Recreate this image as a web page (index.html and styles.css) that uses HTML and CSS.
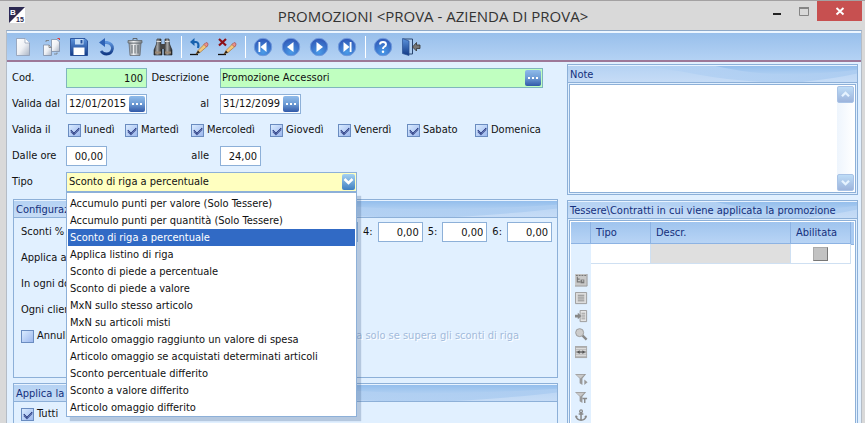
FILE: index.html
```html
<!DOCTYPE html>
<html lang="it">
<head>
<meta charset="utf-8">
<title>Promozioni</title>
<link rel="stylesheet" href="styles.css">
</head>
<body>
<svg class="defs" aria-hidden="true">
  <defs>
    <linearGradient id="paper" x1="0" y1="0" x2="1" y2="1"><stop offset="0" stop-color="#fff"/><stop offset=".5" stop-color="#eef0f4"/><stop offset="1" stop-color="#a9b3c4"/></linearGradient>
    <linearGradient id="blue" x1="0" y1="0" x2="0" y2="1"><stop offset="0" stop-color="#5c93dc"/><stop offset="1" stop-color="#123a86"/></linearGradient>
    <radialGradient id="ball" cx=".5" cy=".8" r=".8"><stop offset="0" stop-color="#4a9be8"/><stop offset="1" stop-color="#2f55b4"/></radialGradient>
    <linearGradient id="metal"><stop offset="0" stop-color="#8d9297"/><stop offset=".4" stop-color="#f3f4f5"/><stop offset="1" stop-color="#747b82"/></linearGradient>
    <linearGradient id="barrel"><stop offset="0" stop-color="#222"/><stop offset=".4" stop-color="#aaa"/><stop offset="1" stop-color="#1c1c1c"/></linearGradient>
    <linearGradient id="wave-fill" x1="0" y1="0" x2="0" y2="1"><stop offset="0" stop-color="#94beec"/><stop offset="1" stop-color="#afcff2"/></linearGradient>
    <linearGradient id="wave-soft" x1="0" y1="0" x2="1" y2="0"><stop offset="0" stop-color="#b4d2f4"/><stop offset="1" stop-color="#a8caf0"/></linearGradient>
    <symbol id="wave" viewBox="0 0 290 17" preserveAspectRatio="none">
      <path d="M50 0Q95 1 130 9Q160 15 195 17H235Q270 13 290 8V0Z" fill="url(#wave-soft)" opacity=".75"/>
      <path d="M148 0Q185 9 225 9Q260 8 290 4V0Z" fill="url(#wave-fill)"/>
    </symbol>
    <symbol id="pencil" viewBox="0 0 20 20">
      <path d="M1 17.5H9" stroke="#111" stroke-width="1.3"/>
      <path d="M7 17L9 13.5L16 6.5L18.5 9L11 15.5Z" fill="#f2c77b" stroke="#a26a24" stroke-width=".6"/>
      <path d="M7 17L9 13.5L11 15.5Z" fill="#2b2118"/>
      <path d="M15 7.5L17 5.5Q19.500 5.500 19 8L17.500 10Z" fill="#e89090" stroke="#9b4444" stroke-width=".6"/>
    </symbol>
    <symbol id="nav" viewBox="0 0 20 20"><circle cx="10" cy="10" r="8.700" fill="url(#ball)" stroke="#6f9ade"/></symbol>
    <symbol id="funnel" viewBox="0 0 14 14"><path d="M0 1H12L8 6V13L5 11V6Z" fill="#999"/><path d="M1 2H10L6 6" fill="#c8c8c8"/></symbol>
  </defs>
</svg>

<header class="titlebar">
  <svg class="logo" viewBox="0 0 16 16" aria-hidden="true"><rect width="16" height="16" rx="1" fill="#fff"/><path d="M0 0H16L0 16Z" fill="#2c2951"/><text x="1" y="8" class="logo-b">B</text><text x="7" y="15" class="logo-n">15</text></svg>
  <h1>PROMOZIONI &lt;PROVA - AZIENDA DI PROVA&gt;</h1>
  <div class="window-buttons">
    <button class="win" aria-label="Riduci"><svg viewBox="0 0 12 12"><path d="M2 9H10" stroke="#222" stroke-width="2"/></svg></button>
    <button class="win" aria-label="Ingrandisci"><svg viewBox="0 0 12 12"><path d="M1.500 3.500H10.500V10.500H1.500Z" fill="none" stroke="#858585"/><path d="M1 3H11" stroke="#858585" stroke-width="2"/></svg></button>
    <button class="win close" aria-label="Chiudi"><svg viewBox="0 0 12 12"><path d="M2.500 3L9.500 9.500M9.500 3L2.500 9.500" stroke="#fff" stroke-width="1.900"/></svg></button>
  </div>
</header>

<div class="frame">
  <nav class="toolbar" aria-label="Comandi">
    <button aria-label="Nuovo"><svg viewBox="0 0 20 20"><path d="M3.500 1.500H12L16.500 6V18.500H3.500Z" fill="url(#paper)" stroke="#8d9bb2" stroke-width=".8"/><path d="M12 1.500V6H16.500" fill="#fff" stroke="#8d9bb2" stroke-width=".7"/></svg></button>
    <button aria-label="Duplica"><svg viewBox="0 0 20 20"><path d="M10.500 2.500H16L18.500 5V14.500H10.500Z" fill="url(#paper)" stroke="#7f8ea6" stroke-width=".8"/><path d="M2.500 8H8L10.500 10.500V18.500H2.500Z" fill="url(#paper)" stroke="#7f8ea6" stroke-width=".8"/><path d="M8 8V10.500H10.500M5 5V3.500H8M13 17H16V15.500" fill="none" stroke="#777" stroke-width=".8"/><path d="M16.500 1.500H18.500V3" stroke="#d33" fill="none"/></svg></button>
    <button aria-label="Salva"><svg viewBox="0 0 20 20"><path d="M1.500 1.500H16L18.500 4V18.500H1.500Z" fill="url(#blue)" stroke="#1a438f" stroke-width=".8"/><path d="M6 2H14.500V7.500H6Z" fill="#c7def6"/><path d="M11.500 3H13.500V6.500H11.500Z" fill="#23509d"/><path d="M4.500 10.500H15.500V18H4.500Z" fill="#fff"/></svg></button>
    <button aria-label="Annulla"><svg viewBox="0 0 20 20"><path d="M5 5.500H10Q15.500 6.500 15.500 11.500Q14.500 17 9.500 17Q6 17 4 14" fill="none" stroke="url(#blue)" stroke-width="2.800"/><path d="M2 5.500L8 1V10Z" fill="#2e62b5"/></svg></button>
    <button aria-label="Elimina"><svg viewBox="0 0 20 20"><path d="M4 6H16L15 18.500H5Z" fill="url(#metal)" stroke="#697078" stroke-width=".8"/><path d="M3 3.500H17V6H3Z" fill="url(#metal)" stroke="#626970" stroke-width=".8"/><path d="M8 3V1.500H12V3M7 8V16.500M10 8V16.500M13 8V16.500" fill="none" stroke="#5f666d"/></svg></button>
    <button aria-label="Cerca"><svg viewBox="0 0 20 20"><path d="M4 2H8V7L9 9V18H1V13L3.500 7Z" fill="url(#barrel)" stroke="#222" stroke-width=".6"/><path d="M12 2H16L16.500 7L19 13V18H11V9L12 7Z" fill="url(#barrel)" stroke="#222" stroke-width=".6"/><path d="M8 7H12V12H8Z" fill="#444"/><path d="M2 15.500H8M12 15.500H18" stroke="#9b8874" stroke-width="2"/><path d="M3.500 4.500H8M12 4.500H16.500" stroke="#ddd"/></svg></button>
    <span class="sep"></span>
    <button aria-label="Ripristina modifica"><svg viewBox="0 0 20 20"><use href="#pencil"/><path d="M4 5H7Q10.500 5.500 9 11" fill="none" stroke="#1761ae" stroke-width="2.200"/><path d="M1 5L5.500 1V9Z" fill="#1761ae"/></svg></button>
    <button aria-label="Annulla modifica"><svg viewBox="0 0 20 20"><use href="#pencil"/><path d="M2 2L9 8.500M9 2L2 8.500" stroke="#8d1017" stroke-width="2.200"/></svg></button>
    <span class="sep"></span>
    <button aria-label="Primo"><svg viewBox="0 0 20 20"><use href="#nav"/><path d="M13.500 5V15L7.500 10ZM5.500 5H7.300V15H5.500Z" fill="#fff"/></svg></button>
    <button aria-label="Precedente"><svg viewBox="0 0 20 20"><use href="#nav"/><path d="M12.500 5V15L6 10Z" fill="#fff"/></svg></button>
    <button aria-label="Successivo"><svg viewBox="0 0 20 20"><use href="#nav"/><path d="M7.500 5V15L14 10Z" fill="#fff"/></svg></button>
    <button aria-label="Ultimo"><svg viewBox="0 0 20 20"><use href="#nav"/><path d="M6.500 5V15L12.500 10ZM12.700 5H14.500V15H12.700Z" fill="#fff"/></svg></button>
    <span class="sep"></span>
    <button aria-label="Aiuto"><svg viewBox="0 0 20 20"><use href="#nav"/><path d="M7 7.500Q7 5 10 5Q13 5 13 7.500Q13 9 11 10Q10 10.500 10 12" fill="none" stroke="#fff" stroke-width="1.900"/><circle cx="10" cy="14.700" r="1.200" fill="#fff"/></svg></button>
    <button aria-label="Esci"><svg viewBox="0 0 20 20"><path d="M2 2H11.500V17H8" fill="#aecdf0" stroke="#29456f"/><path d="M1.500 1.500L8 4V18.500L1.500 16.500Z" fill="url(#blue)" stroke="#284f91" stroke-width=".7"/><path d="M19 8V11.500H15.500V14L11.500 10L15.500 5.500V8Z" fill="#777" stroke="#333" stroke-width=".8"/></svg></button>
  </nav>

  <main class="content">
    <form class="left">
      <div class="fields">
        <label for="cod">Cod.</label>
        <input class="box green num" id="cod" value="100">
        <label class="mid" for="descr">Descrizione</label>
        <div class="box green combo wide"><input id="descr" value="Promozione Accessori"><button type="button" class="dots" aria-label="Sfoglia descrizione"><i></i><i></i><i></i></button></div>

        <label for="dal">Valida dal</label>
        <div class="box combo"><input id="dal" value="12/01/2015"><button type="button" class="dots" aria-label="Scegli data inizio"><i></i><i></i><i></i></button></div>
        <label class="mid" for="al">al</label>
        <div class="box combo date"><input id="al" value="31/12/2099"><button type="button" class="dots" aria-label="Scegli data fine"><i></i><i></i><i></i></button></div>

        <span>Valida il</span>
        <div class="days">
          <label><input type="checkbox" checked>lunedì</label>
          <label><input type="checkbox" checked>Martedì</label>
          <label><input type="checkbox" checked>Mercoledì</label>
          <label><input type="checkbox" checked>Giovedì</label>
          <label><input type="checkbox" checked>Venerdì</label>
          <label><input type="checkbox" checked>Sabato</label>
          <label><input type="checkbox" checked>Domenica</label>
        </div>

        <label for="ore1">Dalle ore</label>
        <input class="box num hour" id="ore1" value="00,00">
        <label class="mid" for="ore2">alle</label>
        <input class="box num hour" id="ore2" value="24,00">

        <label for="tipo">Tipo</label>
        <div class="picker">
          <select class="box" id="tipo"><option>Sconto di riga a percentuale</option></select>
          <span class="arrow"><svg viewBox="0 0 13 15"><path d="M2.500 5L6.500 9L10.500 5" fill="none" stroke="#fff" stroke-width="2.500"/></svg></span>
          <ul class="menu" role="listbox" aria-label="Tipo">
            <li role="option">Accumulo punti per valore (Solo Tessere)</li>
            <li role="option">Accumulo punti per quantità (Solo Tessere)</li>
            <li role="option" aria-selected="true" class="selected">Sconto di riga a percentuale</li>
            <li role="option">Applica listino di riga</li>
            <li role="option">Sconto di piede a percentuale</li>
            <li role="option">Sconto di piede a valore</li>
            <li role="option">MxN sullo stesso articolo</li>
            <li role="option">MxN su articoli misti</li>
            <li role="option">Articolo omaggio raggiunto un valore di spesa</li>
            <li role="option">Articolo omaggio se acquistati determinati articoli</li>
            <li role="option">Sconto percentuale differito</li>
            <li role="option">Sconto a valore differito</li>
            <li role="option">Articolo omaggio differito</li>
          </ul>
        </div>
      </div>

      <section class="panel config">
        <h2><svg class="wave" aria-hidden="true"><use href="#wave"/></svg><span>Configuraz</span></h2>
        <div class="rows">
          <div class="row">
            <span>Sconti %</span>
            <div class="discounts">
              <label>3:<input class="box num" aria-label="Sconto 3"></label>
              <label>4:<input class="box num" value="0,00"></label>
              <label>5:<input class="box num" value="0,00"></label>
              <label>6:<input class="box num" value="0,00"></label>
            </div>
          </div>
          <div class="row">Applica al</div>
          <div class="row">In ogni do</div>
          <div class="row">Ogni clien</div>
          <div class="row"><label><input type="checkbox">Annulla</label><span class="disabled">Annulla solo se supera gli sconti di riga</span></div>
        </div>
      </section>

      <section class="panel open">
        <h2><svg class="wave" aria-hidden="true"><use href="#wave"/></svg><span>Applica la p</span></h2>
        <div class="rows"><div class="row"><label><input type="checkbox" checked>Tutti</label></div></div>
      </section>
    </form>

    <aside class="right">
      <section class="panel">
        <h2><svg class="wave" aria-hidden="true"><use href="#wave"/></svg><label for="note">Note</label></h2>
        <div class="note">
          <textarea id="note"></textarea>
          <div class="scroll">
            <button aria-label="Scorri su"><svg viewBox="0 0 17 17"><path d="M4.500 10.500L8.500 6.500L12.500 10.500" fill="none" stroke="#e6f3ff" stroke-width="2.500"/></svg></button>
            <button aria-label="Scorri giù"><svg viewBox="0 0 17 17"><path d="M4.500 6.500L8.500 10.500L12.500 6.500" fill="none" stroke="#e6f3ff" stroke-width="2.500"/></svg></button>
          </div>
        </div>
      </section>
      <section class="panel open cards">
        <h2><svg class="wave" aria-hidden="true"><use href="#wave"/></svg><span>Tessere\Contratti in cui viene applicata la promozione</span></h2>
        <div class="sheet">
          <div class="side">
            <div class="corner"></div>
            <button aria-label="Struttura"><svg viewBox="0 0 14 14"><path d="M0 0H13V13H0Z" fill="#c8c8c8"/><path d="M13 0V13H0" fill="none" stroke="#999"/><path d="M1 1.500H3M4 1.500H6M7 1.500H9M10 1.500H12" stroke="#666"/><path d="M2.500 3V8.500H6M2.500 5.500H5" fill="none" stroke="#777" stroke-width="1.200"/><path d="M6 6H10V10H6Z" fill="#777"/><path d="M7.500 7.500H9" stroke="#eee"/></svg></button>
            <button aria-label="Elenco"><svg viewBox="0 0 14 14"><path d="M.5.500H12.500V12.500H.5Z" fill="#ddd" stroke="#999"/><path d="M3 3.500H10M3 5.500H10M3 7.500H10M3 9.500H10" stroke="#888"/></svg></button>
            <button aria-label="Inserisci"><svg viewBox="0 0 14 14"><path d="M5.500.500H12.500V12.500H5.500Z" fill="#e5e5e5" stroke="#999"/><path d="M7 3.500H11M7 5.500H11M7 7.500H11M7 9.500H11" stroke="#999"/><path d="M0 5H3V3L7 6.500L3 10V8H0Z" fill="#888"/></svg></button>
            <button aria-label="Trova"><svg viewBox="0 0 14 14"><path d="M8 8L12.500 12.500" stroke="#888" stroke-width="2.500"/><circle cx="5" cy="5" r="4.300" fill="#ccc" stroke="#999"/></svg></button>
            <button aria-label="Colonne"><svg viewBox="0 0 14 14"><path d="M0 0H13V13H0Z" fill="#aaa"/><path d="M1 2.500H12M1 4.500H12M1 8.500H12M1 10.500H12" stroke="#eee"/><path d="M2 6.500L5 4.500V8.500ZM11 6.500L8 4.500V8.500Z" fill="#555"/><path d="M4 6.500H9" stroke="#555"/></svg></button>
            <button class="later" aria-label="Filtro"><svg viewBox="0 0 14 14"><use href="#funnel"/><path d="M10 7L13.500 10L10 13Z" fill="#999"/></svg></button>
            <button aria-label="Filtro testo"><svg viewBox="0 0 14 14"><use href="#funnel"/><path d="M8 8H13M10.500 8V13" stroke="#888" stroke-width="1.500"/></svg></button>
            <button aria-label="Ancora"><svg viewBox="0 0 14 14"><circle cx="6.500" cy="2.500" r="1.500" fill="none" stroke="#888" stroke-width="1.300"/><path d="M6.500 4V12M4 5.500H9M1 8Q2 12 6.500 12Q11 12 12 8" fill="none" stroke="#888" stroke-width="1.600"/><path d="M0 9L1 6.500L3.500 9ZM13 9L12 6.500L9.500 9Z" fill="#888"/></svg></button>
          </div>
          <div class="table-wrap">
            <table>
              <thead><tr><th class="c-type">Tipo</th><th>Descr.</th><th class="c-on">Abilitata</th></tr></thead>
              <tbody><tr><td></td><td class="gray"></td><td class="center"><input type="checkbox" class="flat" aria-label="Abilitata"></td></tr></tbody>
            </table>
          </div>
        </div>
      </section>
    </aside>
  </main>
</div>
</body>
</html>
```

FILE: styles.css
```css
* { box-sizing: border-box; }

:root {
  --line: #8db0d8;
  --bg: #e1f0ff;
  --navy: #142f7c;
}

body {
  margin: 0;
  height: 100vh;
  overflow: hidden;
  display: flex;
  flex-direction: column;
  background: #d9d9d9;
  border-top: 1px solid #a3a1a2;
  font: 11px/14px "DejaVu Sans Condensed", "DejaVu Sans", sans-serif;
  color: #111;
}

.defs { position: absolute; width: 0; height: 0; }

button, input, select, textarea { font: inherit; color: inherit; margin: 0; }
button { padding: 0; border: 0; background: none; display: flex; align-items: center; justify-content: center; }

/* Title bar */
.titlebar { position: relative; flex: none; height: 29px; display: flex; justify-content: space-between; padding: 0 3px 0 9px; }
.logo { width: 16px; height: 16px; margin-top: 6px; }
.logo-b { font: bold 8px "Liberation Sans", sans-serif; fill: #fff; }
.logo-n { font: bold 7px "Liberation Sans", sans-serif; fill: #2c2951; }
h1 { margin: 0; flex: 1; padding-left: 78px; text-align: center; font: 15px/30px "Open Sans", sans-serif; color: #333; white-space: nowrap; }
.window-buttons { display: flex; height: 20px; }
.win { width: 27px; height: 20px; }
.win svg { width: 12px; height: 12px; }
.close { width: 45px; background: #c75050; }

/* Window frame */
.frame { flex: 1; min-height: 0; display: flex; flex-direction: column; margin: 0 3px 0 6px; border: 1px solid #b4bcc6; border-top-color: #8fa9c8; border-bottom: 0; background: var(--bg); }
.toolbar { flex: none; height: 31px; display: flex; align-items: center; padding-left: 2px; border-top: 2px solid #edf6ff; border-bottom: 2px solid #9d7898; background: linear-gradient(#98bfeb, #b4d2f4); }
.toolbar button { width: 28px; height: 26px; }
.toolbar svg { width: 20px; height: 20px; }
.sep { width: 8px; height: 22px; display: flex; justify-content: center; }
.sep::before { content: ""; width: 1px; background: #fff; }

/* Content columns */
.content { flex: 1; min-height: 0; display: grid; grid-template-columns: minmax(0, 1fr) 291px; grid-template-rows: minmax(0, 1fr); gap: 9px; padding: 2px 3px 0 5px; }
.left { display: flex; flex-direction: column; min-height: 0; padding-top: 4px; }
.right { display: flex; flex-direction: column; gap: 5px; min-height: 0; }

.fields { display: grid; grid-template-columns: 54px 81px 62px minmax(0, 1fr); grid-auto-rows: 20px; row-gap: 6px; align-items: center; margin-right: 15px; white-space: nowrap; }
.mid { text-align: right; }
.mid + * { margin-left: 11px; }
.box { height: 20px; min-width: 0; border: 1px solid var(--line); border-radius: 0; background: #fff; padding: 0 3px; outline: 0; }
.num { text-align: right; }
.green { background: #c0ffc0; border-color: #7fb6bd; }
.hour { width: 41px; }
.date { width: 81px; }
.combo { display: flex; align-items: center; padding: 0 1px 0 2px; }
.combo input { flex: 1; min-width: 0; width: 0; padding: 0; border: 0; background: none; outline: 0; }
.wide { padding-left: 1px; }
.dots { width: 16px; height: 16px; gap: 2px; border-radius: 2px; background: linear-gradient(#8fbbea, #6d9bd4 50%, #3159a8); }
.dots i { width: 2px; height: 2px; background: #fff; }

input[type="checkbox"] { appearance: none; flex: none; width: 13px; height: 13px; margin: 0 3px 0 0; border: 1px solid #6a8cc0; background: linear-gradient(135deg, #d9ebff, #9db8ee); display: grid; place-items: center; }
input[type="checkbox"]:checked::before { content: ""; width: 7px; height: 4px; margin-bottom: 2px; border: solid #14246f; border-width: 0 0 1px 1px; transform: rotate(-45deg); box-shadow: -1px 1px 0 rgba(20, 36, 111, .7); }
.days { grid-column: 2 / -1; display: grid; grid-template-columns: 57px 66px 79px 68px 69px 68px auto; padding-left: 2px; }
.days label, .row label { display: flex; align-items: center; }

/* Type drop-down */
.picker { position: relative; grid-column: 2 / -1; width: 291px; height: 20px; }
select.box { appearance: none; display: block; width: 100%; padding: 0 2px; background: #ffffc0; }
.arrow { position: absolute; top: 2px; right: 2px; width: 13px; height: 16px; border-radius: 2px; background: linear-gradient(#a5d2f2, #3f7fc0); pointer-events: none; }
.arrow svg { display: block; }
.menu { position: absolute; z-index: 2; top: 100%; left: 0; right: 0; margin: 0; padding: 2px 1px 0; list-style: none; background: #fff; border: 1px solid var(--line); box-shadow: 4px 4px 1px rgba(80, 110, 150, .3); }
.menu li { height: 17px; padding-left: 2px; line-height: 17px; }
.menu .selected { background: #316ac5; color: #fff; }

/* Panels */
.panel { border: 1px solid var(--line); }
.panel h2 { position: relative; margin: 0; height: 18px; padding: 0 2px; border-top: 1px solid #e8f3ff; border-bottom: 1px solid var(--line); background: linear-gradient(#b5d2f3, #c6dcf6); font: inherit; line-height: 17px; color: var(--navy); white-space: nowrap; }
.panel h2 > :not(svg) { position: relative; }
.wave { position: absolute; inset: 0; width: 100%; height: 100%; }
.wave use { width: 100%; height: 100%; }
.left .panel { margin-left: 1px; }
.left .config { margin-top: 7px; height: 179px; }
.open { flex: 1; min-height: 0; margin-top: 5px; border-bottom: 0; }
.right .open { margin-top: 0; }
.rows { display: grid; grid-auto-rows: 20px; row-gap: 6px; padding: 4px 5px 0 7px; }
.open .rows { padding-top: 2px; }
.row { display: flex; align-items: center; justify-content: space-between; white-space: nowrap; }
.discounts { display: flex; gap: 5px; }
.discounts label { gap: 5px; }
.discounts .box { width: 45px; }
.disabled { color: #a3bbdc; text-shadow: 1px 1px #fff; margin-right: 33px; }

.note { display: flex; margin: 1px; height: 109px; padding: 1px; border: 1px solid var(--line); background: #fff; }
.note textarea { flex: 1; min-width: 0; resize: none; border: 0; outline: 0; background: #fff; }
.scroll { width: 17px; display: flex; flex-direction: column; justify-content: space-between; background: linear-gradient(90deg, #eef5fd, #fff); }
.scroll button { width: 17px; height: 17px; border: 1px solid #a9c3e6; border-radius: 2px; background: linear-gradient(#bedcf6, #9db4dc); }

/* Cards grid */
.cards { display: flex; flex-direction: column; }
.sheet { flex: 1; min-height: 0; display: flex; margin: 1px 1px 0; padding: 1px 1px 0; border: 1px solid var(--line); border-bottom: 0; background: #fff; overflow: hidden; }
.side { width: 20px; display: flex; flex-direction: column; align-items: center; gap: 5px; background: var(--bg); }
.side button { flex: none; width: 13px; height: 13px; }
.side svg { width: 13px; height: 13px; }
.side .later { margin-top: 9px; }
.corner { flex: none; width: 100%; height: 22px; margin-bottom: 25px; border-bottom: 1px solid #8db3e3; border-right: 1px solid #8db3e3; background: linear-gradient(#9fc4ee, #b8d4f5); }
.table-wrap { flex: 1; min-width: 0; }
.table-wrap::before { content: ""; float: right; width: 3px; height: 22px; background: #a9caf1; border-bottom: 1px solid #8db3e3; }
table { width: calc(100% - 3px); table-layout: fixed; border-collapse: separate; border-spacing: 0; }
th { height: 22px; padding: 0 5px; text-align: left; font-weight: normal; color: var(--navy); background: linear-gradient(#9fc4ee, #b8d4f5); border-right: 1px solid #8db3e3; border-bottom: 1px solid #8db3e3; }
.c-type, .c-on { width: 60px; }
td { height: 20px; padding: 0; border-right: 1px solid #cfe0f2; border-bottom: 1px solid #cfe0f2; }
td.gray { background: #dfdfdf; }
td.center { vertical-align: middle; }
input.flat[type="checkbox"] { margin: 0 auto; width: 15px; height: 14px; background: #c2c2c2; border: 1px solid; border-color: #aaa #777 #777 #aaa; }
```
